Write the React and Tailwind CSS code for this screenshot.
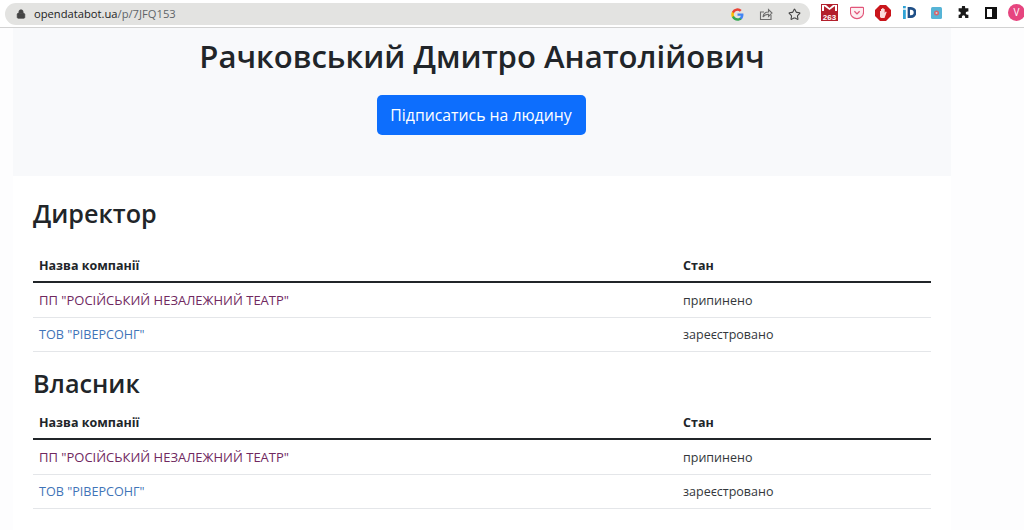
import React from 'react';
import { Lock, Star } from 'lucide-react';

const companies = [
    { name: 'ПП "РОСІЙСЬКИЙ НЕЗАЛЕЖНИЙ ТЕАТР"', status: 'припинено', style: 'text-[13px] text-[#70295f]' },
    { name: 'ТОВ "РІВЕРСОНГ"', status: 'зареєстровано', style: 'text-[12.600px] text-[#3f74b8]' },
];

const CompanyTable = () => (
    <div className="text-[12.500px] text-[#33373b]">
        <div className="flex h-[35px] items-center border-b-2 border-[#212529] px-[6px] pt-[3px] font-bold text-[#212529]">
            <div className="w-[644px]">Назва компанії</div>
            <div>Стан</div>
        </div>
        {companies.map((company, index) => (
            <div key={company.name} className={`flex items-center border-b border-[#e4e6e9] px-[6px] pt-[2px] ${index === 0 ? 'h-[35px]' : 'h-[34px]'}`}>
                <div className={`w-[644px] ${company.style}`}>{company.name}</div>
                <div>{company.status}</div>
            </div>
        ))}
    </div>
);

const GoogleIcon = () => (
    <svg width="13" height="13" viewBox="0 0 24 24">
        <path d="M23 12.300c0-.8-.1-1.600-.2-2.300H12v4.400h6.200a5.300 5.300 0 0 1-2.300 3.400v2.900h3.700c2.200-2 3.400-5 3.400-8.400z" fill="#4285f4" />
        <path d="M12 23.500c3.100 0 5.700-1 7.600-2.800l-3.700-2.900c-1 .7-2.400 1.100-3.900 1.100-3 0-5.500-2-6.400-4.700H1.800v3A11.500 11.500 0 0 0 12 23.500z" fill="#34a853" />
        <path d="M5.600 14.200a6.900 6.900 0 0 1 0-4.400v-3H1.800a11.500 11.500 0 0 0 0 10.400z" fill="#fbbc05" />
        <path d="M12 5.100c1.700 0 3.200.6 4.400 1.700l3.300-3.300A11.500 11.500 0 0 0 1.800 6.800l3.800 3C6.500 7.100 9 5.100 12 5.100z" fill="#ea4335" />
    </svg>
);

const ShareIcon = () => (
    <svg width="14" height="14" viewBox="0 0 14 14" fill="none" stroke="#6d6d6d" strokeWidth="1.100">
        <path d="M12 8v4.500H1.500V5H5" />
        <path d="M4 10c.3-3.500 2.500-5 5.500-5V2.500L13 6l-3.500 3.500V7.200C7 7.200 5.300 8 4 10z" />
    </svg>
);

const ExtensionIcons = () => (
    <div className="ml-[11px] flex items-center pt-[1px]">
        <svg width="17" height="17" viewBox="0 0 17 17">
            <rect x="0" y="0" width="17" height="17" fill="#b3202c" />
            <path d="M1 1h4l3.500 3L12 1h4v6H1z" fill="#fff" />
            <path d="M3 2l5.500 4L14 2v5H3z" fill="#b3202c" />
            <text x="8.500" y="15.500" fontSize="8" fontWeight="700" textAnchor="middle" fill="#fff" fontFamily="Liberation Sans, sans-serif">263</text>
        </svg>
        <svg width="14" height="14" viewBox="0 0 16 16" className="ml-[12px]">
            <path d="M1.500 1.500h13a1 1 0 0 1 1 1V7a7.500 7.500 0 0 1-15 0V2.500a1 1 0 0 1 1-1z" fill="#fdeef1" stroke="#e2557a" strokeWidth="1.300" />
            <path d="M5 6l3 3 3-3" fill="none" stroke="#e2557a" strokeWidth="1.500" />
        </svg>
        <svg width="16" height="16" viewBox="0 0 16 16" className="ml-[11px]">
            <path d="M5 0h6l5 5v6l-5 5H5l-5-5V5z" fill="#c9151b" />
            <path d="M5 12V6h1V4h1.200V3h1.300v1h1.200v4l1-1.500 1 .5L9.500 13H6z" fill="#fbdcdc" />
        </svg>
        <svg width="13" height="13" viewBox="0 0 14 14" className="ml-[12px]">
            <rect x="0" y="0" width="3" height="2.500" fill="#2fa3d6" />
            <rect x="0" y="4" width="3" height="10" fill="#2fa3d6" />
            <path d="M5 1h3.500a6 6 0 0 1 0 12H5zM7.500 4v6h1a3 3 0 0 0 0-6z" fill="#1f4f86" />
        </svg>
        <svg width="11" height="12" viewBox="0 0 11 12" className="ml-[15px]">
            <rect width="11" height="12" rx="1.500" fill="#56b4d6" />
            <circle cx="5.500" cy="6" r="2.500" fill="#d9626a" />
            <circle cx="5.500" cy="6" r="1" fill="#b8dbe8" />
        </svg>
        <svg width="13" height="13" viewBox="0 0 24 24" fill="#1a1a1a" className="ml-[15px]">
            <path d="M9 2a3 3 0 0 1 6 0v2h6v6h-2a3 3 0 0 0 0 6h2v6h-6v-2a3 3 0 0 0-6 0v2H3v-6h1a3 3 0 0 0 0-6H3V4h6z" />
        </svg>
        <div className="ml-[15px] flex h-[12px] w-[12px] border-2 border-[#111]">
            <div className="grow bg-white" />
            <div className="w-[3px] bg-[#111]" />
        </div>
        <div className="ml-[11px] flex h-[17px] w-[17px] shrink-0 items-center justify-center rounded-full bg-[#e6457f] text-[10px] text-white">V</div>
    </div>
);

export default function App() {
    return (
        <div className="h-[530px] w-[1024px] overflow-hidden bg-[#fdfdfe] font-['Open_Sans','Noto_Sans',sans-serif]">
            <div className="flex h-[28px] items-start overflow-hidden border-b border-[#d2d2d2] bg-white pt-[3px]">
                <div className="ml-[5px] flex h-[22px] w-[805px] shrink-0 items-center justify-between rounded-full bg-[#e3e3e1] pl-[11px] pr-[9px]">
                    <div className="flex items-center gap-[8px] text-[11.200px] text-[#5f6368]">
                        <Lock size={10} fill="#444" stroke="#444" />
                        <span><span className="text-[#222]">opendatabot.ua</span>/p/7JFQ153</span>
                    </div>
                    <div className="flex items-center gap-[15px]">
                        <GoogleIcon />
                        <ShareIcon />
                        <Star size={13} stroke="#444" />
                    </div>
                </div>
                <ExtensionIcons />
            </div>
            <div className="mx-[13px] w-[938px] bg-white">
                <div className="flex h-[148px] flex-col items-center bg-[#f8f9fb] pt-[6px]">
                    <h1 className="text-[31.100px] font-semibold leading-[44px] text-[#212529]">Рачковський Дмитро Анатолійович</h1>
                    <button className="mr-[2px] mt-[17px] h-[40px] w-[209px] rounded-[5px] bg-[#0d6efd] pt-[2px] text-[15.800px] text-white">Підписатись на людину</button>
                </div>
                <div className="h-[354px] px-[20px] pt-[19px]">
                    <h2 className="text-[25.200px] font-semibold leading-[36px] text-[#212529]">Директор</h2>
                    <div className="mt-[17px]"><CompanyTable /></div>
                    <h2 className="mt-[13px] text-[25.200px] font-semibold leading-[36px] text-[#212529]">Власник</h2>
                    <div className="mt-[4px]"><CompanyTable /></div>
                </div>
            </div>
        </div>
    );
}
